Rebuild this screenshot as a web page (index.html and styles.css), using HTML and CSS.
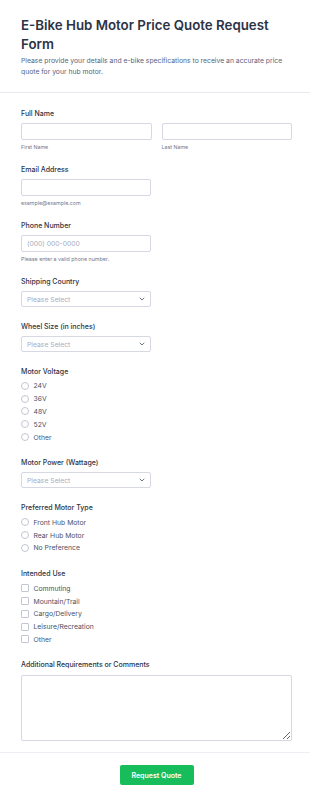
FILE: index.html
```html
<!DOCTYPE html>
<html lang="en">
<head>
    <meta charset="UTF-8">
    <meta name="viewport" content="width=device-width, initial-scale=1.0">
    <title>E-Bike Hub Motor Price Quote Request Form</title>
    <link rel="stylesheet" href="styles.css">
</head>
<body>
    <form class="form">
        <div class="form-header">
            <h1>E-Bike Hub Motor Price Quote Request Form</h1>
            <p>Please provide your details and e-bike specifications to receive an accurate price quote for your hub motor.</p>
        </div>

        <ul class="form-fields">
            <li class="field">
                <label class="field-label">Full Name</label>
                <div class="name-row">
                    <div class="name-col">
                        <input type="text" class="text-input">
                        <span class="sublabel">First Name</span>
                    </div>
                    <div class="name-col">
                        <input type="text" class="text-input">
                        <span class="sublabel">Last Name</span>
                    </div>
                </div>
            </li>

            <li class="field">
                <label class="field-label">Email Address</label>
                <input type="email" class="text-input half">
                <span class="sublabel">example@example.com</span>
            </li>

            <li class="field">
                <label class="field-label">Phone Number</label>
                <input type="text" class="text-input half" placeholder="(000) 000-0000">
                <span class="sublabel">Please enter a valid phone number.</span>
            </li>

            <li class="field wide-gap">
                <label class="field-label">Shipping Country</label>
                <div class="select half">
                    <span>Please Select</span>
                    <svg width="6" height="4" viewBox="0 0 6 4"><path d="M1 1l2 2 2-2" fill="none" stroke="#57647e" stroke-width="0.9" stroke-linecap="round" stroke-linejoin="round"/></svg>
                </div>
            </li>

            <li class="field wide-gap">
                <label class="field-label">Wheel Size (in inches)</label>
                <div class="select half">
                    <span>Please Select</span>
                    <svg width="6" height="4" viewBox="0 0 6 4"><path d="M1 1l2 2 2-2" fill="none" stroke="#57647e" stroke-width="0.9" stroke-linecap="round" stroke-linejoin="round"/></svg>
                </div>
            </li>

            <li class="field wide-gap">
                <label class="field-label">Motor Voltage</label>
                <div class="options">
                    <label class="option"><input type="radio" name="voltage"> 24V</label>
                    <label class="option"><input type="radio" name="voltage"> 36V</label>
                    <label class="option"><input type="radio" name="voltage"> 48V</label>
                    <label class="option"><input type="radio" name="voltage"> 52V</label>
                    <label class="option"><input type="radio" name="voltage"> Other</label>
                </div>
            </li>

            <li class="field wide-gap">
                <label class="field-label">Motor Power (Wattage)</label>
                <div class="select half">
                    <span>Please Select</span>
                    <svg width="6" height="4" viewBox="0 0 6 4"><path d="M1 1l2 2 2-2" fill="none" stroke="#57647e" stroke-width="0.9" stroke-linecap="round" stroke-linejoin="round"/></svg>
                </div>
            </li>

            <li class="field wide-gap">
                <label class="field-label">Preferred Motor Type</label>
                <div class="options">
                    <label class="option"><input type="radio" name="type"> Front Hub Motor</label>
                    <label class="option"><input type="radio" name="type"> Rear Hub Motor</label>
                    <label class="option"><input type="radio" name="type"> No Preference</label>
                </div>
            </li>

            <li class="field wide-gap">
                <label class="field-label">Intended Use</label>
                <div class="options">
                    <label class="option"><input type="checkbox"> Commuting</label>
                    <label class="option"><input type="checkbox"> Mountain/Trail</label>
                    <label class="option"><input type="checkbox"> Cargo/Delivery</label>
                    <label class="option"><input type="checkbox"> Leisure/Recreation</label>
                    <label class="option"><input type="checkbox"> Other</label>
                </div>
            </li>

            <li class="field last">
                <label class="field-label">Additional Requirements or Comments</label>
                <textarea class="textarea"></textarea>
            </li>
        </ul>

        <div class="form-footer">
            <button type="submit" class="btn">Request Quote</button>
        </div>
    </form>
</body>
</html>
```
FILE: styles.css
```css
body {
    font-family: 'Inter', 'Liberation Sans', sans-serif;
    margin: 0;
    padding: 0;
    background-color: #fff;
    color: #2c3345;
}

.form {
    width: 310px;
}

.form-header {
    padding: 16px 21px 15px;
    border-bottom: 1px solid #e8e9ee;
}

.form-header h1 {
    margin: 0;
    max-width: 271px;
    font-size: 13.3px;
    line-height: 18.5px;
    font-weight: 600;
    color: #2c3345;
}

.form-header p {
    margin: 1.5px 0 0;
    font-size: 6.8px;
    line-height: 11px;
    color: #57647e;
}

.form-fields {
    list-style: none;
    margin: 0;
    padding: 16px 18px 11px 21px;
}

.field {
    display: flex;
    flex-direction: column;
    align-items: flex-start;
    margin-bottom: 13.5px;
}

.field.wide-gap {
    margin-bottom: 14.5px;
}

.field.last {
    margin-bottom: 0;
}

.field-label {
    font-size: 7px;
    line-height: 10px;
    font-weight: 500;
    margin-bottom: 4.5px;
}

.name-row {
    display: grid;
    grid-template-columns: 1fr 1fr;
    gap: 10px;
    width: 100%;
}

.name-col {
    display: flex;
    flex-direction: column;
}

.text-input {
    box-sizing: border-box;
    width: 100%;
    height: 16.5px;
    margin: 0;
    padding: 0 5px;
    border: 1px solid #d6d9e3;
    border-radius: 2px;
    font-family: inherit;
    font-size: 6.8px;
    color: #2c3345;
    background: #fff;
}

.text-input::placeholder {
    color: #a9aec0;
}

.half {
    width: 130px;
}

.sublabel {
    margin-top: 3.5px;
    font-size: 5.3px;
    line-height: 8px;
    color: #6f7891;
}

.select {
    box-sizing: border-box;
    height: 16px;
    display: flex;
    align-items: center;
    justify-content: space-between;
    padding: 0 5px;
    border: 1px solid #d6d9e3;
    border-radius: 2px;
    font-size: 6.8px;
    color: #a9aec0;
}

.options {
    display: flex;
    flex-direction: column;
    margin-top: -1.5px;
}

.option {
    display: flex;
    align-items: center;
    height: 12.8px;
    font-size: 6.8px;
    color: #4a5266;
}

.option input {
    appearance: none;
    box-sizing: border-box;
    width: 8px;
    height: 8px;
    margin: 0 4.5px 0 0;
    border: 1px solid #c3c7d3;
    background: #fff;
}

.option input[type="radio"] {
    border-radius: 50%;
}

.option input[type="checkbox"] {
    border-radius: 1px;
}

.textarea {
    box-sizing: border-box;
    width: 271px;
    height: 66.5px;
    margin: 0;
    border: 1px solid #d6d9e3;
    border-radius: 2px;
    font-family: inherit;
    display: block;
}

.form-footer {
    border-top: 1px solid #eceef3;
    padding: 12px 18px 20px 21px;
    display: flex;
    justify-content: center;
}

.btn {
    background-color: #18bd5b;
    color: #fff;
    width: 74px;
    height: 20px;
    border: none;
    border-radius: 2px;
    font-family: inherit;
    font-size: 7px;
    font-weight: 600;
    cursor: pointer;
}
```
